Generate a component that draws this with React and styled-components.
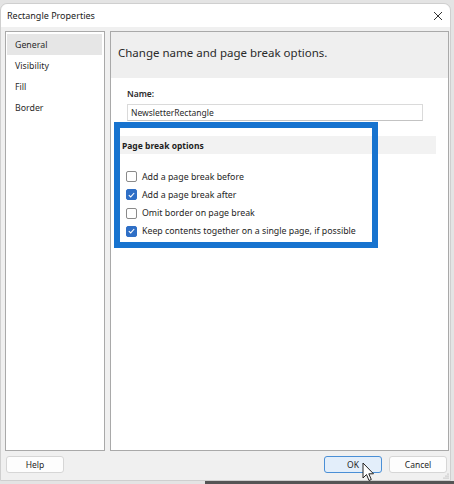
import React from 'react';
import styled, { createGlobalStyle } from 'styled-components';

const GlobalStyle = createGlobalStyle`
  html, body {
    margin: 0;
    padding: 0;
    background: #e4e4e4;
    font-family: "Noto Sans", "Open Sans", sans-serif;
    color: #1b1b1b;
  }
`;

const Screen = styled.div`
  width: 454px;
  height: 484px;
  position: relative;
  overflow: hidden;
  display: flex;
  flex-direction: column;
  padding-top: 3px;
  box-sizing: border-box;
`;

const Window = styled.div`
  width: 451px;
  height: 478px;
  background: #f0f0f0;
  border: 1px solid #cfcfcf;
  border-radius: 7px 7px 0 0;
  box-sizing: border-box;
  display: flex;
  flex-direction: column;
  position: relative;
`;

const BottomStrip = styled.div`
  display: flex;
  height: 3px;
`;

const StripPart = styled.div`
  flex: ${(p) => p.grow};
  background: ${(p) => p.color};
`;

const TitleBar = styled.div`
  height: 24px;
  background: #fff;
  border-radius: 7px 7px 0 0;
  display: flex;
  align-items: center;
  justify-content: space-between;
  padding: 0 6px 0 6px;
  font-size: 9px;
  color: #222;
`;

const Close = styled.div`
  width: 12px;
  height: 12px;
  display: flex;
  align-items: center;
  justify-content: center;
`;

const Body = styled.div`
  flex: 1;
  display: flex;
  gap: 5px;
  padding: 4px 0 0 4px;
`;

const NavPanel = styled.div`
  width: 100px;
  height: 420px;
  background: #fff;
  border: 1px solid #a9a9a9;
  box-sizing: border-box;
  padding: 2px 1px 1px;
  display: flex;
  flex-direction: column;
`;

const NavItem = styled.div`
  height: 21px;
  display: flex;
  align-items: center;
  padding-left: 8px;
  font-size: 8.8px;
  color: #2a2a2a;
  background: ${(p) => (p.active ? '#e6e6e6' : 'transparent')};
  margin-right: 1px;
`;

const MainPanel = styled.div`
  width: 339px;
  height: 420px;
  background: #fff;
  border: 1px solid #a9a9a9;
  box-sizing: border-box;
  position: relative;
  display: flex;
  flex-direction: column;
`;

const Header = styled.div`
  height: 46px;
  background: #efefef;
  display: flex;
  align-items: center;
  padding: 0 0 6px 7px;
  box-sizing: border-box;
  font-size: 11.5px;
  color: #2a2a2a;
`;

const Form = styled.div`
  padding: 10px 0 0 16px;
  display: flex;
  flex-direction: column;
`;

const Label = styled.div`
  font-size: 8.5px;
  font-weight: 600;
  color: #2a2a2a;
  height: 12px;
  line-height: 12px;
`;

const Input = styled.div`
  margin-top: 4px;
  width: 296px;
  height: 17px;
  border: 1px solid #dadada;
  border-bottom-color: #c3c3c3;
  box-sizing: border-box;
  display: flex;
  align-items: center;
  padding-left: 3px;
  font-size: 8.5px;
  color: #2a2a2a;
`;

const SectionHeader = styled.div`
  margin: 15px 0 0 -9px;
  width: 318px;
  height: 18px;
  background: #f2f2f2;
  display: flex;
  align-items: center;
  padding-left: 4px;
  box-sizing: border-box;
  font-size: 8.5px;
  font-weight: 700;
  color: #1e1e1e;
`;

const Options = styled.div`
  margin-top: 17px;
  display: flex;
  flex-direction: column;
  gap: 7.3px;
`;

const Option = styled.div`
  display: flex;
  align-items: center;
  gap: 5px;
  height: 11px;
  font-size: 8.8px;
  color: #1e1e1e;
`;

const Box = styled.div`
  width: 11px;
  height: 11px;
  box-sizing: border-box;
  border-radius: 2px;
  margin-left: -1px;
  border: 1px solid ${(p) => (p.checked ? '#2f6fc6' : '#8a8a8a')};
  background: ${(p) => (p.checked ? '#2f6fc6' : '#fff')};
  display: flex;
  align-items: center;
  justify-content: center;
`;

const Highlight = styled.div`
  position: absolute;
  left: 3px;
  top: 90px;
  width: 264px;
  height: 126px;
  border: 6px solid #1773cf;
  box-sizing: border-box;
  pointer-events: none;
`;

const Footer = styled.div`
  height: 28px;
  display: flex;
  align-items: center;
  padding: 0 3px 2px 5px;
  gap: 7px;
`;

const Button = styled.div`
  width: 58px;
  height: 17px;
  box-sizing: border-box;
  border: 1px solid ${(p) => (p.primary ? '#4a8fd6' : '#d6d6d6')};
  background: ${(p) => (p.primary ? '#e3eefa' : '#fdfdfd')};
  border-radius: 3px;
  display: flex;
  align-items: center;
  justify-content: center;
  font-size: 8.5px;
  color: #1e1e1e;
  margin-left: ${(p) => (p.push ? 'auto' : '0')};
`;

const Grip = styled.svg`
  position: absolute;
  right: 1px;
  bottom: 1px;
`;

const Cursor = styled.svg`
  position: absolute;
  left: 362px;
  top: 462px;
`;

const Check = () => (
  <svg width="7" height="6" viewBox="0 0 7 6">
    <path d="M0.8 3.1 L2.7 4.9 L6.2 1" fill="none" stroke="#fff" strokeWidth="1.1" />
  </svg>
);

const options = [
  { label: 'Add a page break before', checked: false },
  { label: 'Add a page break after', checked: true },
  { label: 'Omit border on page break', checked: false },
  { label: 'Keep contents together on a single page, if possible', checked: true },
];

const navItems = ['General', 'Visibility', 'Fill', 'Border'];

export default function App() {
  return (
    <Screen>
      <GlobalStyle />
      <Window>
        <TitleBar>
          <span>Rectangle Properties</span>
          <Close>
            <svg width="10" height="10" viewBox="0 0 10 10">
              <path d="M1 1 L9 9 M9 1 L1 9" stroke="#333" strokeWidth="1" />
            </svg>
          </Close>
        </TitleBar>
        <Body>
          <NavPanel>
            {navItems.map((item, i) => (
              <NavItem key={item} active={i === 0}>{item}</NavItem>
            ))}
          </NavPanel>
          <MainPanel>
            <Header>Change name and page break options.</Header>
            <Form>
              <Label>Name:</Label>
              <Input>NewsletterRectangle</Input>
              <SectionHeader>Page break options</SectionHeader>
              <Options>
                {options.map((o) => (
                  <Option key={o.label}>
                    <Box checked={o.checked}>{o.checked && <Check />}</Box>
                    <span>{o.label}</span>
                  </Option>
                ))}
              </Options>
            </Form>
            <Highlight />
          </MainPanel>
        </Body>
        <Footer>
          <Button>Help</Button>
          <Button primary push>OK</Button>
          <Button>Cancel</Button>
        </Footer>
        <Grip width="7" height="7" viewBox="0 0 7 7">
          <circle cx="6" cy="2" r="0.6" fill="#999" />
          <circle cx="4" cy="4" r="0.6" fill="#999" />
          <circle cx="6" cy="4" r="0.6" fill="#999" />
          <circle cx="2" cy="6" r="0.6" fill="#999" />
          <circle cx="4" cy="6" r="0.6" fill="#999" />
          <circle cx="6" cy="6" r="0.6" fill="#999" />
        </Grip>
      </Window>
      <BottomStrip>
        <StripPart grow={205} color="#e4e4e4" />
        <StripPart grow={249} color="#555" />
      </BottomStrip>
      <Cursor width="13" height="20" viewBox="0 0 13 20">
        <path d="M1 1 L1 16 L4.5 12.5 L7 18.5 L9.3 17.5 L6.8 11.8 L11.5 11.8 Z" fill="#fff" stroke="#222" strokeWidth="1" strokeLinejoin="round" />
      </Cursor>
    </Screen>
  );
}
